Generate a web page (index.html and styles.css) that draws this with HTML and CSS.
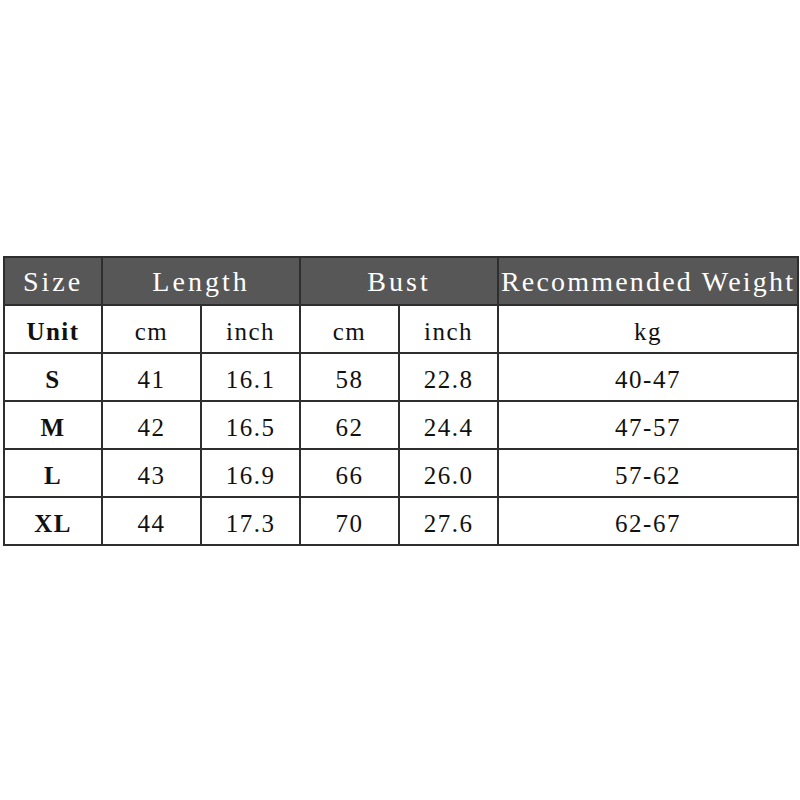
FILE: index.html
```html
<!DOCTYPE html>
<html>
<head>
<meta charset="utf-8">
<link rel="stylesheet" href="styles.css">
</head>
<body>
<div class="page">
<table class="sizes">
  <colgroup>
    <col class="c1"><col class="c2"><col class="c2"><col class="c2"><col class="c2"><col class="c6">
  </colgroup>
  <tr class="head">
    <th>Size</th>
    <th colspan="2">Length</th>
    <th colspan="2">Bust</th>
    <th class="rw">Recommended Weight</th>
  </tr>
  <tr>
    <td class="lbl">Unit</td><td>cm</td><td>inch</td><td>cm</td><td>inch</td><td>kg</td>
  </tr>
  <tr>
    <td class="lbl">S</td><td>41</td><td>16.1</td><td>58</td><td>22.8</td><td>40-47</td>
  </tr>
  <tr>
    <td class="lbl">M</td><td>42</td><td>16.5</td><td>62</td><td>24.4</td><td>47-57</td>
  </tr>
  <tr>
    <td class="lbl">L</td><td>43</td><td>16.9</td><td>66</td><td>26.0</td><td>57-62</td>
  </tr>
  <tr>
    <td class="lbl">XL</td><td>44</td><td>17.3</td><td>70</td><td>27.6</td><td>62-67</td>
  </tr>
</table>
</div>
</body>
</html>
```
FILE: styles.css
```css
html, body {
  margin: 0;
  padding: 0;
  background: #ffffff;
}
.page {
  width: 800px;
  height: 800px;
  padding: 256px 0 0 3px;
  box-sizing: border-box;
}
.sizes {
  border-collapse: collapse;
  table-layout: fixed;
  width: 796px;
  font-family: "Liberation Serif", "Times New Roman", serif;
  color: #111;
}
.c1 { width: 98px; }
.c2 { width: 99px; }
.c6 { width: 300px; }
.sizes th, .sizes td {
  border: 2px solid #2e2e2e;
  padding: 0;
  text-align: center;
  vertical-align: middle;
  line-height: 1;
}
.head th {
  background: #575757;
  color: #ffffff;
  font-weight: normal;
  font-size: 28px;
  letter-spacing: 3px;
  height: 44px;
  padding-top: 2px;
}
.head th.rw {
  letter-spacing: 2.2px;
  white-space: nowrap;
}
.sizes td {
  font-size: 25px;
  letter-spacing: 1.5px;
  height: 42px;
  padding-top: 4px;
}
.sizes td.lbl {
  font-weight: bold;
}
```
